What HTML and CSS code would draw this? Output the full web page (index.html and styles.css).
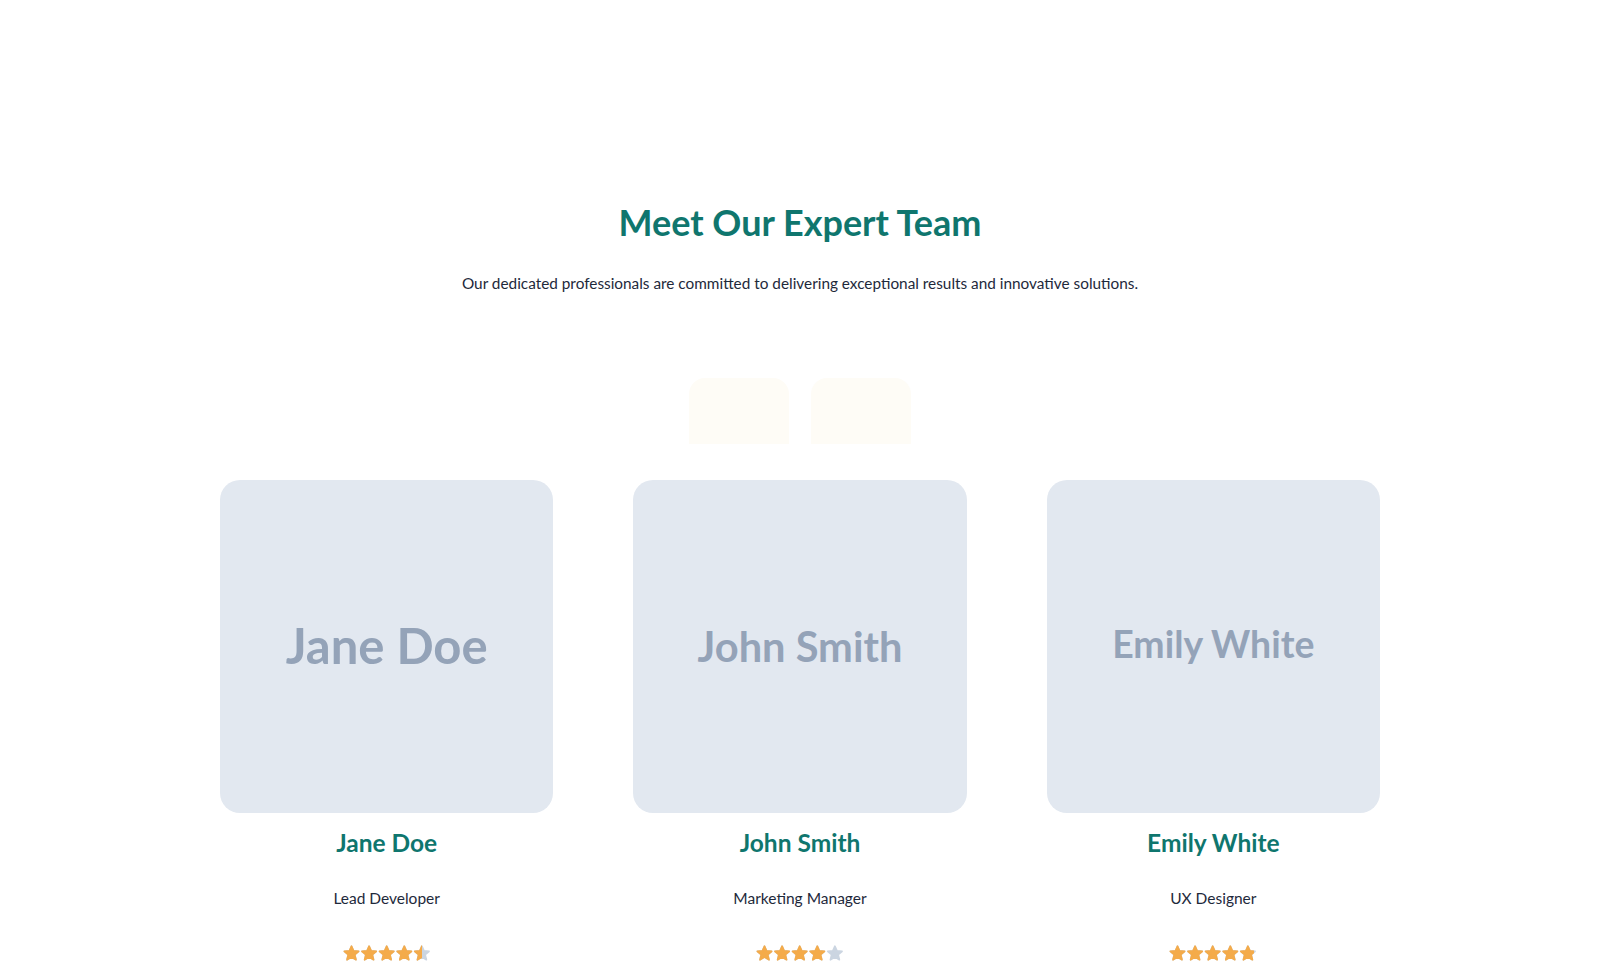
FILE: index.html
```html
<!DOCTYPE html>
<html lang="en">
<head>
<meta charset="utf-8">
<title>Meet Our Expert Team</title>
<link rel="stylesheet" href="styles.css">
</head>
<body>
<section class="team">
  <h2 class="team-title">Meet Our Expert Team</h2>
  <p class="team-lead">Our dedicated professionals are committed to delivering exceptional results and innovative solutions.</p>

  <div class="team-controls">
    <span class="ghost-btn"></span>
    <span class="ghost-btn"></span>
  </div>

  <div class="team-grid">
    <article class="member">
      <div class="member-photo"><span class="photo-label label-lg">Jane Doe</span></div>
      <h3 class="member-name">Jane Doe</h3>
      <p class="member-role">Lead Developer</p>
      <div class="rating" aria-label="4.5 out of 5">
        <svg class="stars stars-empty" viewBox="0 0 88 17"><use href="#star-row"/></svg>
        <div class="stars-fill" style="width: 90%">
          <svg class="stars" viewBox="0 0 88 17"><use href="#star-row"/></svg>
        </div>
      </div>
    </article>

    <article class="member">
      <div class="member-photo"><span class="photo-label label-md">John Smith</span></div>
      <h3 class="member-name">John Smith</h3>
      <p class="member-role">Marketing Manager</p>
      <div class="rating" aria-label="4 out of 5">
        <svg class="stars stars-empty" viewBox="0 0 88 17"><use href="#star-row"/></svg>
        <div class="stars-fill" style="width: 80%">
          <svg class="stars" viewBox="0 0 88 17"><use href="#star-row"/></svg>
        </div>
      </div>
    </article>

    <article class="member">
      <div class="member-photo"><span class="photo-label label-sm">Emily White</span></div>
      <h3 class="member-name">Emily White</h3>
      <p class="member-role">UX Designer</p>
      <div class="rating" aria-label="4.8 out of 5">
        <svg class="stars stars-empty" viewBox="0 0 88 17"><use href="#star-row"/></svg>
        <div class="stars-fill" style="width: 96%">
          <svg class="stars" viewBox="0 0 88 17"><use href="#star-row"/></svg>
        </div>
      </div>
    </article>
  </div>
</section>

<svg class="sprite" width="0" height="0" aria-hidden="true">
  <defs>
    <polygon id="star" points="8.5,1.2 10.6,5.9 15.7,6.3 11.8,9.7 13,14.8 8.5,12.1 4,14.8 5.2,9.7 1.3,6.3 6.4,5.9"
      stroke-width="1.6" stroke-linejoin="round"/>
    <g id="star-row">
      <use href="#star" x="0"/>
      <use href="#star" x="17.6"/>
      <use href="#star" x="35.2"/>
      <use href="#star" x="52.8"/>
      <use href="#star" x="70.4"/>
    </g>
  </defs>
</svg>
</body>
</html>
```
FILE: styles.css
```css
* {
  box-sizing: border-box;
}

body {
  margin: 0;
  background: #ffffff;
  font-family: "Lato", "Noto Sans", sans-serif;
  color: #1e293b;
}

.team {
  max-width: 1200px;
  margin: 0 auto;
  padding: 200px 20px 40px;
  text-align: center;
}

.team-title {
  margin: 0;
  font-size: 36px;
  line-height: 44px;
  font-weight: 700;
  color: #0f766e;
}

.team-lead {
  margin: 27px 0 0;
  font-size: 15.35px;
  line-height: 24px;
  color: #1e293b;
}

.team-controls {
  display: flex;
  justify-content: center;
  gap: 22px;
  margin-top: 83px;
}

.ghost-btn {
  width: 100px;
  height: 66px;
  border-radius: 16px 16px 0 0;
  background: #fefcf6;
}

.team-grid {
  display: grid;
  grid-template-columns: repeat(3, 1fr);
  gap: 80px;
  margin-top: 36px;
}

.member-photo {
  aspect-ratio: 1 / 1;
  border-radius: 20px;
  background: #e2e8f0;
  display: flex;
  align-items: center;
  justify-content: center;
}

.photo-label {
  font-family: "Lato", sans-serif;
  font-weight: 700;
  color: #94a3b8;
  line-height: 1;
}

.label-lg {
  font-size: 49px;
  margin-top: -2px;
}

.label-md {
  font-size: 41.6px;
}

.label-sm {
  font-size: 37.4px;
  margin-top: -6px;
}

.member-name {
  margin: 16px 0 0;
  font-size: 24.5px;
  line-height: 28px;
  font-weight: 700;
  color: #0f766e;
}

.member-role {
  margin: 29px 0 0;
  font-size: 15.5px;
  line-height: 24px;
  color: #1e293b;
}

.rating {
  position: relative;
  width: 88px;
  height: 17px;
  margin: 35px auto 0;
}

.stars {
  display: block;
  width: 88px;
  height: 17px;
}

.stars-empty {
  fill: #cbd5e1;
  stroke: #cbd5e1;
}

.stars-fill {
  position: absolute;
  top: 0;
  left: 0;
  height: 17px;
  overflow: hidden;
  fill: #f4ab4a;
  stroke: #f4ab4a;
}

.sprite {
  position: absolute;
  width: 0;
  height: 0;
}
```
